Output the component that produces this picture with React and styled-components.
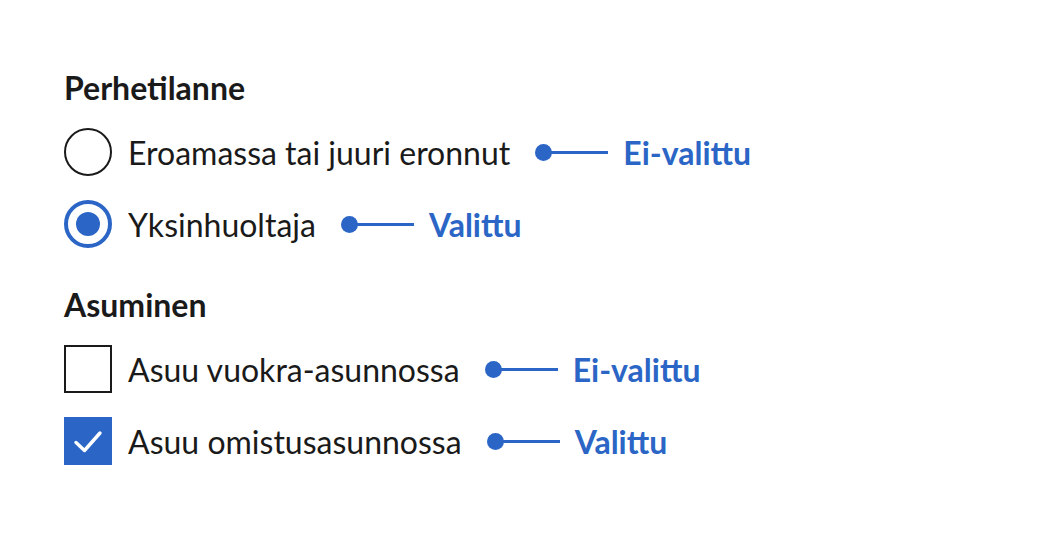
import styled, { createGlobalStyle } from "styled-components";

const GlobalStyle = createGlobalStyle`
  html, body {
    margin: 0;
    padding: 0;
    background: #fff;
  }
  body {
    font-family: Lato, "Noto Sans", sans-serif;
    color: #1a1a1a;
  }
`;

const BLUE = "#2b66c6";

const Page = styled.main`
  width: 1050px;
  height: 538px;
  box-sizing: border-box;
  padding: 69px 0 0 64px;
`;

const Group = styled.section`
  display: flex;
  flex-direction: column;
  margin-bottom: 38px;
`;

const Heading = styled.h2`
  margin: 0 0 21px;
  font-size: 32px;
  font-weight: 700;
  line-height: 38px;
  color: #1a1a1a;
`;

const Options = styled.ul`
  list-style: none;
  margin: 0;
  padding: 0;
  display: flex;
  flex-direction: column;
  gap: 24px;
`;

const Option = styled.li`
  display: flex;
  align-items: center;
  height: 48px;
`;

const Radio = styled.span`
  box-sizing: border-box;
  width: 48px;
  height: 48px;
  border-radius: 50%;
  border: ${(p) => (p.$checked ? `4px solid ${BLUE}` : "2px solid #1a1a1a")};
  display: flex;
  align-items: center;
  justify-content: center;

  &::after {
    content: "";
    display: ${(p) => (p.$checked ? "block" : "none")};
    width: 24px;
    height: 24px;
    border-radius: 50%;
    background: ${BLUE};
  }
`;

const Box = styled.span`
  box-sizing: border-box;
  width: 48px;
  height: 48px;
  border: 2px solid ${(p) => (p.$checked ? BLUE : "#1a1a1a")};
  background: ${(p) => (p.$checked ? BLUE : "#fff")};
  display: flex;
  align-items: center;
  justify-content: center;
`;

const Label = styled.span`
  margin-left: 16px;
  font-size: 32px;
  font-weight: 400;
  color: #1a1a1a;
`;

const Annotation = styled.span`
  display: flex;
  align-items: center;
  margin-left: 25px;
  color: ${BLUE};
  font-size: 32px;
  font-weight: 700;
`;

const Dot = styled.span`
  width: 17px;
  height: 17px;
  border-radius: 50%;
  background: ${BLUE};
`;

const Line = styled.span`
  width: 58px;
  height: 3px;
  margin-left: -2px;
  background: ${BLUE};
`;

const Note = styled.span`
  margin-left: 15px;
`;

const Check = () => (
  <svg width="32" height="32" viewBox="0 0 32 32" fill="none">
    <path
      d="M4 17.5 L12.5 25.5 L28 8"
      stroke="#fff"
      strokeWidth="3.4"
      strokeLinecap="round"
      strokeLinejoin="round"
    />
  </svg>
);

const Tag = ({ children }) => (
  <Annotation>
    <Dot />
    <Line />
    <Note>{children}</Note>
  </Annotation>
);

const App = () => {
  return (
    <Page>
      <GlobalStyle />
      <Group>
        <Heading>Perhetilanne</Heading>
        <Options>
          <Option>
            <Radio />
            <Label>Eroamassa tai juuri eronnut</Label>
            <Tag>Ei-valittu</Tag>
          </Option>
          <Option>
            <Radio $checked />
            <Label>Yksinhuoltaja</Label>
            <Tag>Valittu</Tag>
          </Option>
        </Options>
      </Group>
      <Group>
        <Heading>Asuminen</Heading>
        <Options>
          <Option>
            <Box />
            <Label>Asuu vuokra-asunnossa</Label>
            <Tag>Ei-valittu</Tag>
          </Option>
          <Option>
            <Box $checked>
              <Check />
            </Box>
            <Label>Asuu omistusasunnossa</Label>
            <Tag>Valittu</Tag>
          </Option>
        </Options>
      </Group>
    </Page>
  );
};

export default App;
